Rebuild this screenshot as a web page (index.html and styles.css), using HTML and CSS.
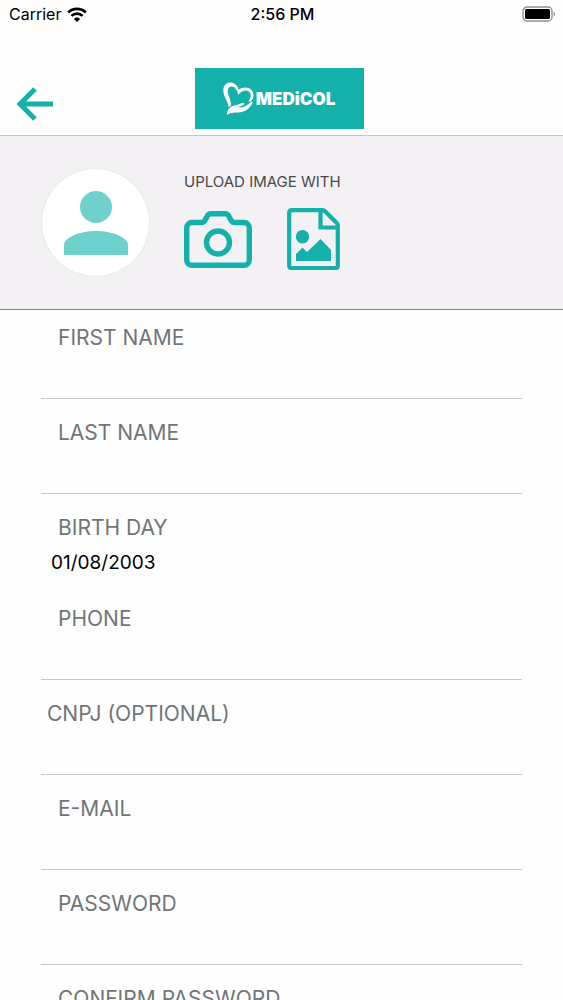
FILE: index.html
```html
<!DOCTYPE html>
<html lang="en">
<head>
<meta charset="utf-8">
<meta name="viewport" content="width=device-width, initial-scale=1">
<title>Medicol</title>
<link rel="stylesheet" href="styles.css">
</head>
<body>
<div class="app">
  <div class="status">
    <div class="carrier">
      <span>Carrier</span>
      <svg class="wifi" viewBox="0 0 20 15" aria-hidden="true">
        <path d="M1.2 5.4a12.5 12.5 0 0 1 17.6 0" fill="none" stroke="#000" stroke-width="2.8"/>
        <path d="M4.4 8.9a8 8 0 0 1 11.2 0" fill="none" stroke="#000" stroke-width="2.6"/>
        <path d="M10 15 6.9 11.9a4.4 4.4 0 0 1 6.2 0z" fill="#000"/>
      </svg>
    </div>
    <span class="time">2:56 PM</span>
    <svg class="battery" viewBox="0 0 34 16" aria-hidden="true">
      <rect x="1" y="1" width="29" height="14" rx="4" fill="none" stroke="#8e8e8e" stroke-width="1.3"/>
      <rect x="3" y="3" width="25" height="10" rx="1.5" fill="#000"/>
      <path d="M31.6 5.5a2.8 2.8 0 0 1 0 5z" fill="#8e8e8e"/>
    </svg>
  </div>
  <header class="nav">
    <button class="back" type="button" aria-label="Back">
      <svg viewBox="0 0 37 34" aria-hidden="true">
        <path d="M37 17H4M19 2 4 17l15 15" fill="none" stroke="#14b1ab" stroke-width="5"/>
      </svg>
    </button>
    <div class="logo">
      <svg class="heart" viewBox="0 0 31 34" aria-hidden="true">
        <path d="M5.500 25C5 19 0 14 .3 8 .6 2 5-.5 9.200.7c4 1.200 5.800 4 6.600 7C18.500 5.500 22.500 4.800 26 6.300c5.500 2.500 5.800 8.700 1.800 13.500l-2.300-.6C28.500 15.500 28.500 11 25.300 9.200c-3.300-1.700-7.300.300-10.100 3.800C14.500 8.500 12 4.200 8.300 4.500 4.300 4.800 4.200 9.500 5.500 13c1.500 4 2.700 7.500 2.500 10.500z" fill="#fff"/>
        <path d="M4 33c-.3-5.500 3.500-9 8.300-9.800 3.200-.5 5.200-2.200 8-2.200 1.600 0 1.500 1.300 0 1.900l-5.300 2.500c4.200.6 8.200-1.300 12-4.600 1.400-1.200 3.200-.9 2.500.5-3 5.200-6.700 8.300-12.500 9-4.600.5-9-.3-13 2.700z" fill="#fff"/>
      </svg>
      <span class="brand">MEDiCOL</span>
    </div>
  </header>
  <section class="upload">
    <div class="avatar">
      <svg viewBox="0 0 64 64" role="img" aria-label="Profile picture">
        <circle cx="32" cy="16" r="16" fill="#6fd1cd"/>
        <path d="M0 64V54C0 46 17 40 32 40s32 6 32 14v10z" fill="#6fd1cd"/>
      </svg>
    </div>
    <div class="sources">
      <h2 class="caption">UPLOAD IMAGE WITH</h2>
      <div class="choices">
        <button class="choice camera" type="button" aria-label="Camera">
          <svg viewBox="0 0 68 57" aria-hidden="true">
            <path d="M8 11.500H17.500C20 11.500 21 9.500 22.500 6.500 24 3 25 2.700 27 2.700H41C43 2.700 44 3 45.500 6.500 47 9.500 48 11.500 50.500 11.500H60a5.300 5.300 0 0 1 5.300 5.300V49a5.300 5.300 0 0 1-5.300 5.300H8A5.300 5.300 0 0 1 2.700 49V16.800A5.300 5.300 0 0 1 8 11.500z" fill="none" stroke="#14b1ab" stroke-width="5.400"/>
            <circle cx="34" cy="31.500" r="11.500" fill="none" stroke="#14b1ab" stroke-width="5.400"/>
          </svg>
        </button>
        <button class="choice gallery" type="button" aria-label="Gallery">
          <svg viewBox="0 0 53 62" aria-hidden="true">
            <path d="M4 2.200H35.500Q37 2.200 38 3.200L49.800 15Q50.800 16 50.800 17.500V58a2 2 0 0 1-2 2H4.200a2 2 0 0 1-2-2V4.200a2 2 0 0 1 2-2z" fill="none" stroke="#14b1ab" stroke-width="4.200"/>
            <path d="M33.500 3V19.500H50" fill="none" stroke="#14b1ab" stroke-width="4.200"/>
            <circle cx="15.500" cy="28.700" r="6.700" fill="#14b1ab"/>
            <path d="M9 53V46l6.500-6.500 4.500 4.500L33.500 31 44 42V53z" fill="#14b1ab"/>
          </svg>
        </button>
      </div>
    </div>
  </section>
  <form class="form">
    <div class="field"><label for="first">FIRST NAME</label><input id="first" type="text"></div>
    <div class="field"><label for="last">LAST NAME</label><input id="last" type="text"></div>
    <div class="field date"><label for="birth">BIRTH DAY</label><input id="birth" type="text" value="01/08/2003"></div>
    <div class="field"><label for="phone">PHONE</label><input id="phone" type="tel"></div>
    <div class="field optional"><label for="cnpj">CNPJ (OPTIONAL)</label><input id="cnpj" type="text"></div>
    <div class="field"><label for="email">E-MAIL</label><input id="email" type="email"></div>
    <div class="field"><label for="password">PASSWORD</label><input id="password" type="password"></div>
    <div class="field"><label for="confirm">CONFIRM PASSWORD</label><input id="confirm" type="password"></div>
  </form>
</div>
</body>
</html>
```
FILE: styles.css
```css
* {
  box-sizing: border-box;
}

body {
  margin: 0;
  background: #fefefe;
  color: #000;
  font-family: Inter, "Liberation Sans", sans-serif;
}

button {
  padding: 0;
  border: 0;
  background: none;
}

svg {
  display: block;
  width: 100%;
}

.app {
  display: flex;
  flex-direction: column;
  height: 100vh;
}

.status {
  display: grid;
  grid-template-columns: 1fr auto 1fr;
  align-items: center;
  flex: none;
  height: 28px;
  padding: 0 7px 0 9px;
  font-size: 16px;
  line-height: 28px;
}

.carrier {
  display: flex;
  align-items: center;
  gap: 6px;
}

.wifi {
  width: 20px;
}

.time {
  font-weight: 500;
}

.battery {
  width: 34px;
  justify-self: end;
}

.nav {
  display: grid;
  grid-template-columns: 1fr auto 1fr;
  align-items: end;
  flex: none;
  height: 108px;
  padding: 0 21px 6px 16px;
  border-bottom: 1px solid #c6c4c8;
}

.back {
  width: 37px;
  margin-bottom: 8px;
}

.logo {
  display: flex;
  align-items: center;
  justify-content: center;
  gap: 2px;
  width: 169px;
  height: 61px;
  background: #14b1ab;
}

.heart {
  width: 31px;
}

.brand {
  color: #fff;
  font-size: 17px;
  font-weight: 900;
}

.upload {
  display: flex;
  align-items: flex-start;
  gap: 34px;
  flex: none;
  padding: 32px 41px;
  border-bottom: 1px solid #858386;
  background: #f3f1f4;
}

.avatar {
  display: flex;
  align-items: center;
  justify-content: center;
  width: 109px;
  height: 109px;
  border: 1px solid #ebe9ec;
  border-radius: 50%;
  background: #fff;
}

.avatar svg {
  width: 64px;
}

.caption {
  margin: 0;
  padding-top: 4px;
  color: #4a484b;
  font-size: 15px;
  font-weight: 400;
  line-height: 20px;
}

.choices {
  display: flex;
  align-items: center;
  gap: 35px;
  padding-top: 16px;
}

.camera {
  width: 68px;
}

.gallery {
  width: 53px;
}

.form {
  display: flex;
  flex-direction: column;
  flex: 1;
  gap: 19px;
  min-height: 0;
  padding: 13px 41px;
  overflow-y: auto;
  scrollbar-width: none;
}

.field {
  display: flex;
  flex-direction: column;
  flex: none;
}

.field label {
  padding-left: 17px;
  color: #6f7577;
  font-size: 21px;
  line-height: 30px;
}

.optional label {
  padding-left: 6px;
}

.field input {
  width: 100%;
  height: 46px;
  padding: 0 10px;
  border: 0;
  border-bottom: 1px solid #c8c6cb;
  outline: 0;
  background: none;
  color: #000;
  font: inherit;
  font-size: 19px;
}

.date input {
  height: 42px;
  padding-bottom: 4px;
  border-bottom: 0;
}
```
